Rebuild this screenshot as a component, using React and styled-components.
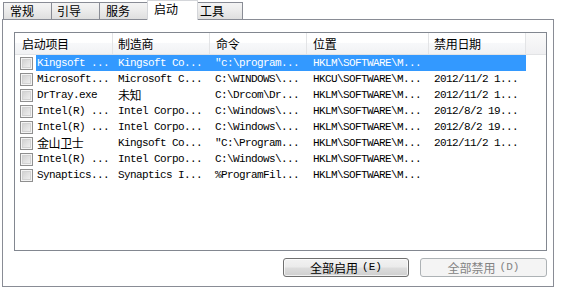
import React from 'react';
import styled, { createGlobalStyle } from 'styled-components';

const GlobalStyle = createGlobalStyle`
  html, body { margin: 0; padding: 0; background: #ffffff; }
  body {
    font-family: "Noto Sans CJK SC", "Liberation Sans", sans-serif;
    font-size: 12px;
    color: #000;
  }
`;

const Window = styled.div`
  width: 561px;
  height: 287px;
  box-sizing: border-box;
  padding-left: 2px;
  display: flex;
  flex-direction: column;
  overflow: hidden;
  background: #fff;
`;

const TabStrip = styled.div`
  display: flex;
  align-items: flex-end;
  height: 19px;
  padding-left: 1px;
  position: relative;
  z-index: 2;
`;

const Tab = styled.div`
  box-sizing: border-box;
  width: ${p => p.$w}px;
  height: ${p => (p.$active ? 20 : 17)}px;
  margin-left: ${p => (p.$first ? 0 : -1)}px;
  margin-bottom: ${p => (p.$active ? -1 : 0)}px;
  padding-left: ${p => p.$pad}px;
  padding-top: ${p => (p.$active ? 1 : 1)}px;
  border: 1px solid ${p => (p.$active ? '#d4d6da' : '#898c95')};
  border-bottom: none;
  background: ${p => (p.$active ? '#ffffff' : 'linear-gradient(to bottom, #f4f4f4 0%, #ebebeb 50%, #dfdfdf 100%)')};
  line-height: 14px;
  font-size: 12px;
  white-space: nowrap;
  position: relative;
  z-index: ${p => (p.$active ? 2 : 1)};
`;

const Panel = styled.div`
  box-sizing: border-box;
  width: 552px;
  height: 268px;
  border: 1px solid #898c95;
  background: #fff;
  padding: 12px 6px 0 11px;
  display: flex;
  flex-direction: column;
`;

const ListView = styled.div`
  box-sizing: border-box;
  width: 533px;
  height: 219px;
  border: 1px solid #828790;
  background: #fff;
  display: flex;
  flex-direction: column;
  overflow: hidden;
`;

const HeaderRow = styled.div`
  box-sizing: border-box;
  display: flex;
  height: 22px;
  border-bottom: 1px solid #e2e3e5;
  background: linear-gradient(to bottom, #ffffff 0%, #ffffff 45%, #f7f8fa 50%, #f1f2f4 100%);
`;

const HeaderCell = styled.div`
  box-sizing: border-box;
  width: ${p => p.$w}px;
  flex: ${p => (p.$fill ? '1 1 auto' : 'none')};
  padding-left: ${p => p.$pad}px;
  border-right: ${p => (p.$fill ? 'none' : '1px solid #e3e4e6')};
  line-height: 21px;
  font-size: 12px;
  letter-spacing: -0.3px;
  white-space: nowrap;
  background: ${p => (p.$fill ? 'linear-gradient(to bottom, #fafafa, #f0f0f2)' : 'transparent')};
`;

const Row = styled.div`
  display: flex;
  height: 16px;
  align-items: stretch;
`;

const CheckCell = styled.div`
  width: 21px;
  flex: none;
  display: flex;
  align-items: center;
  padding-left: 5px;
  box-sizing: border-box;
`;

const CheckBox = styled.div`
  box-sizing: border-box;
  width: 13px;
  height: 13px;
  border: 1px solid #8f8f8f;
  background: #f4f4f4;
  box-shadow: inset 0 0 0 1px #f4f4f4, inset 0 0 0 2px #d2d2d2;
  background-image: linear-gradient(135deg, #cbcbcb 0%, #f6f6f6 100%);
`;

const SelArea = styled.div`
  display: flex;
  background: ${p => (p.$selected ? '#3399ff' : 'transparent')};
  color: ${p => (p.$selected ? '#ffffff' : '#000000')};
`;

const Cell = styled.div`
  box-sizing: border-box;
  width: ${p => p.$w}px;
  flex: none;
  padding-left: ${p => p.$pad}px;
  font-family: "Liberation Mono", "Noto Sans CJK SC", monospace;
  font-size: 11px;
  letter-spacing: -0.6px;
  line-height: 16px;
  white-space: nowrap;
  overflow: hidden;
`;

const Cjk = styled.span`
  font-family: "Noto Sans CJK SC", sans-serif;
  font-size: 12px;
  letter-spacing: -0.4px;
`;

const ButtonRow = styled.div`
  display: flex;
  justify-content: flex-end;
  gap: 11px;
  margin-top: 7px;
  width: 533px;
`;

const Button = styled.div`
  box-sizing: border-box;
  width: ${p => p.$w}px;
  height: 19px;
  border: 1px solid ${p => (p.$disabled ? '#adb2b5' : '#707070')};
  border-radius: 3px;
  background: ${p => (p.$disabled
    ? '#f4f4f4'
    : 'linear-gradient(to bottom, #f2f2f2 0%, #ebebeb 48%, #dddddd 52%, #cfcfcf 100%)')};
  box-shadow: ${p => (p.$disabled ? 'none' : 'inset 0 0 0 1px rgba(255,255,255,0.7)')};
  color: ${p => (p.$disabled ? '#838383' : '#000')};
  display: flex;
  align-items: center;
  justify-content: center;
  font-size: 12px;
  line-height: 17px;
  white-space: nowrap;
`;

const Key = styled.span`
  font-family: "Liberation Mono", monospace;
  font-size: 11px;
  margin-left: 4px;
`;

const tabs = [
  { label: '常规', w: 49, pad: 6 },
  { label: '引导', w: 49, pad: 5 },
  { label: '服务', w: 49, pad: 6 },
  { label: '启动', w: 51, pad: 6, active: true },
  { label: '工具', w: 46, pad: 2 },
];

const cols = [
  { label: '启动项目', w: 98, pad: 7 },
  { label: '制造商', w: 97, pad: 5 },
  { label: '命令', w: 97, pad: 6 },
  { label: '位置', w: 122, pad: 6 },
  { label: '禁用日期', w: 97, pad: 5 },
];

const cellCols = [
  { w: 77, pad: 1 },
  { w: 97, pad: 5 },
  { w: 97, pad: 5 },
  { w: 122, pad: 6 },
  { w: 97, pad: 5 },
];

const rows = [
  ['Kingsoft ...', 'Kingsoft Co...', '"c:\\program...', 'HKLM\\SOFTWARE\\M...', ''],
  ['Microsoft...', 'Microsoft C...', 'C:\\WINDOWS\\...', 'HKCU\\SOFTWARE\\M...', '2012/11/2 1...'],
  ['DrTray.exe', '未知', 'C:\\Drcom\\Dr...', 'HKLM\\SOFTWARE\\M...', '2012/11/2 1...'],
  ['Intel(R) ...', 'Intel Corpo...', 'C:\\Windows\\...', 'HKLM\\SOFTWARE\\M...', '2012/8/2 19...'],
  ['Intel(R) ...', 'Intel Corpo...', 'C:\\Windows\\...', 'HKLM\\SOFTWARE\\M...', '2012/8/2 19...'],
  ['金山卫士', 'Kingsoft Co...', '"C:\\Program...', 'HKLM\\SOFTWARE\\M...', '2012/11/2 1...'],
  ['Intel(R) ...', 'Intel Corpo...', 'C:\\Windows\\...', 'HKLM\\SOFTWARE\\M...', ''],
  ['Synaptics...', 'Synaptics I...', '%ProgramFil...', 'HKLM\\SOFTWARE\\M...', ''],
];

const isCjk = s => /[\u4e00-\u9fff]/.test(s);

export default function App() {
  return (
    <>
      <GlobalStyle />
      <Window>
        <TabStrip>
          {tabs.map((t, i) => (
            <Tab key={t.label} $w={t.w} $pad={t.pad} $active={t.active} $first={i === 0}>
              {t.label}
            </Tab>
          ))}
        </TabStrip>
        <Panel>
          <ListView>
            <HeaderRow>
              {cols.map(c => (
                <HeaderCell key={c.label} $w={c.w} $pad={c.pad}>{c.label}</HeaderCell>
              ))}
              <HeaderCell $fill />
            </HeaderRow>
            {rows.map((r, i) => (
              <Row key={i}>
                <CheckCell><CheckBox /></CheckCell>
                <SelArea $selected={i === 0}>
                  {r.map((txt, j) => (
                    <Cell key={j} $w={cellCols[j].w} $pad={cellCols[j].pad}>
                      {isCjk(txt) ? <Cjk>{txt}</Cjk> : txt}
                    </Cell>
                  ))}
                </SelArea>
              </Row>
            ))}
          </ListView>
          <ButtonRow>
            <Button $w={126}>全部启用<Key>(E)</Key></Button>
            <Button $w={127} $disabled>全部禁用<Key>(D)</Key></Button>
          </ButtonRow>
        </Panel>
      </Window>
    </>
  );
}
